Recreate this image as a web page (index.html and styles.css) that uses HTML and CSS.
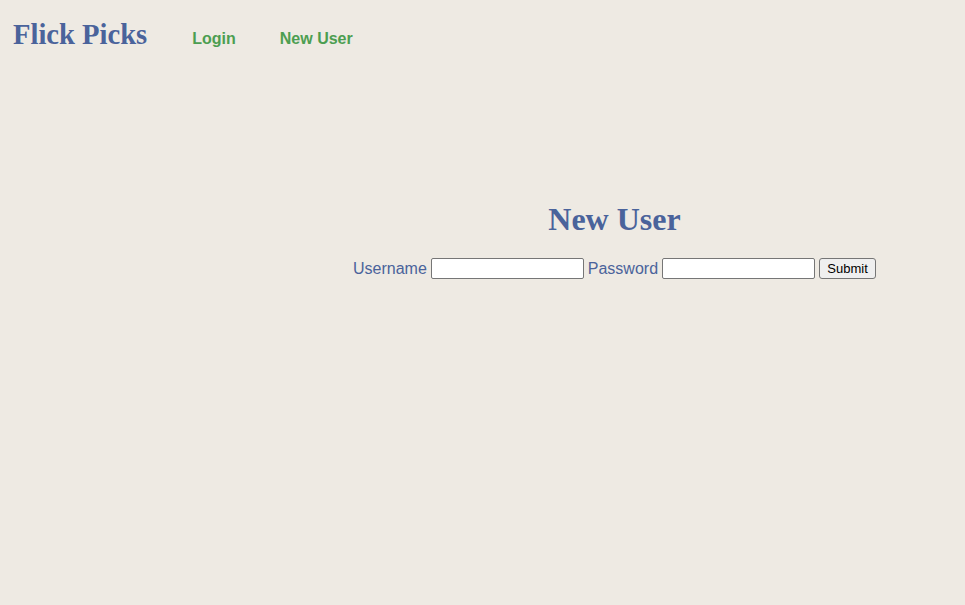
FILE: index.html
```html
<!DOCTYPE html>
<html lang="en">
<head>
<meta charset="utf-8">
<title>Flick Picks</title>
<link rel="stylesheet" href="styles.css">
</head>
<body>
<header class="topbar">
  <h1 class="logo">Flick Picks</h1>
  <nav class="nav">
    <a class="nav-link" href="#">Login</a>
    <a class="nav-link" href="#">New User</a>
  </nav>
</header>
<main class="main">
  <section class="signup">
    <h2 class="signup-title">New User</h2>
    <form class="signup-form">
      <label class="field-label" for="username">Username</label>
      <input class="field-input" id="username" type="text">
      <label class="field-label" for="password">Password</label>
      <input class="field-input" id="password" type="password">
      <button class="submit-btn" type="submit">Submit</button>
    </form>
  </section>
</main>
</body>
</html>
```

FILE: styles.css
```css
html, body {
  margin: 0;
  padding: 0;
}
body {
  background: #eeeae3;
  min-height: 605px;
  font-family: "Liberation Sans", Arial, sans-serif;
}
.topbar {
  display: flex;
  align-items: baseline;
  gap: 45px;
  padding: 18px 13px 0;
}
.logo {
  margin: 0;
  font-family: "Liberation Serif", "Times New Roman", serif;
  font-weight: bold;
  font-size: 28.6px;
  color: #4a639b;
  line-height: 34px;
}
.nav {
  display: flex;
  gap: 44px;
}
.nav-link {
  font-weight: bold;
  font-size: 16px;
  color: #4c9e51;
  text-decoration: none;
}
.main {
  padding-left: 264px;
  padding-top: 149px;
}
.signup {
  text-align: center;
}
.signup-title {
  margin: 0 0 20px;
  font-family: "Liberation Serif", "Times New Roman", serif;
  font-weight: bold;
  font-size: 32px;
  line-height: 37px;
  color: #4a639b;
}
.signup-form {
  display: flex;
  justify-content: center;
  align-items: center;
  gap: 4px;
}
.field-label {
  font-size: 16px;
  color: #4a639b;
}
.field-input {
  box-sizing: border-box;
  width: 153px;
  height: 21px;
  border: 1px solid #767676;
  border-radius: 2px;
  background: #fff;
  padding: 1px 2px;
}
.submit-btn {
  box-sizing: border-box;
  width: 57px;
  height: 21px;
  border: 1px solid #767676;
  border-radius: 3px;
  background: #efefef;
  font-family: "Liberation Sans", Arial, sans-serif;
  font-size: 13px;
  color: #000;
  padding: 0;
}
```
